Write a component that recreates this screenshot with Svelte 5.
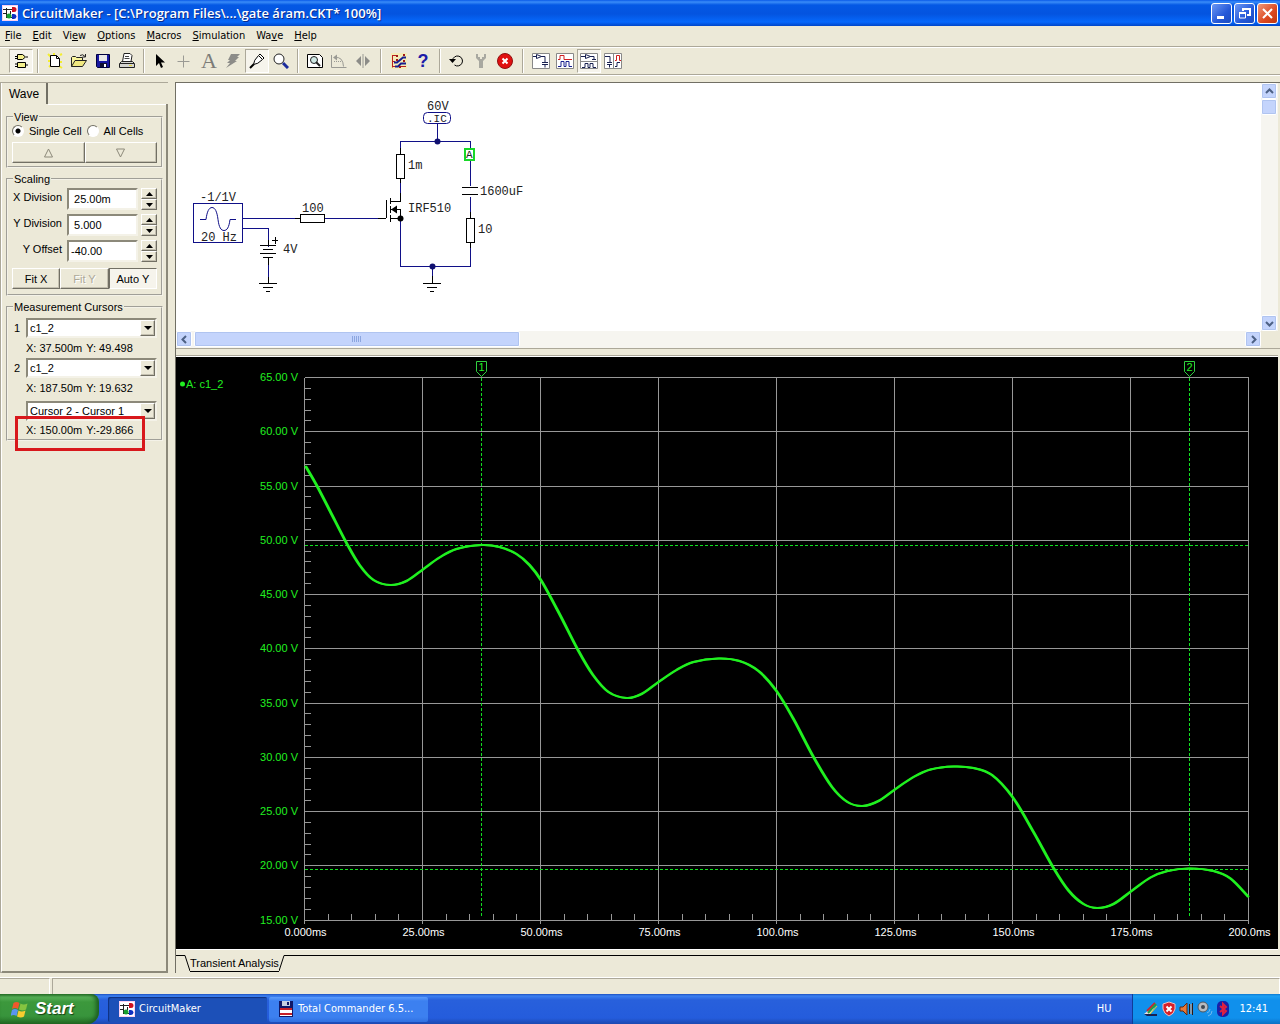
<script>
  const menus = [
    ['', 'F', 'ile'], ['', 'E', 'dit'], ['Vi', 'e', 'w'], ['', 'O', 'ptions'],
    ['', 'M', 'acros'], ['', 'S', 'imulation'], ['Wa', 'v', 'e'], ['', 'H', 'elp'],
  ];

  let scaling = $state([
    { id: 'xdiv', label: 'X Division', value: ' 25.00m' },
    { id: 'ydiv', label: 'Y Division', value: ' 5.000' },
    { id: 'yoff', label: 'Y Offset', value: '-40.00' },
  ]);
  let cell = $state('single');

  // plot area, in screen units
  const left = 304.5;
  const top = 377.5;
  const right = 1248.5;
  const bottom = 920.5;
  const stepX = 118;
  const stepY = 54.25;

  const xLabels = ['0.000ms', '25.00ms', '50.00ms', '75.00ms', '100.0ms', '125.0ms', '150.0ms', '175.0ms', '200.0ms'];
  const yLabels = Array.from({ length: 11 }, (_, i) => `${65 - i * 5}.00 V`);
  const snap = (v) => Math.floor(v) + 0.5;
  const xTicks = Array.from({ length: 41 }, (_, i) => snap(left + i * 23.6));
  const yTicks = Array.from({ length: 51 }, (_, i) => snap(top + i * 10.85));

  const cursors = [
    { n: 1, x: 481.5, y: 545.5 },
    { n: 2, x: 1189.5, y: 869.5 },
  ];

  // cursor lines: 3 on, 2 off
  function dashes({ x, y }) {
    let d = '';
    for (let v = 378; v < bottom - 3; v += 5) d += `M${x} ${v}v3`;
    for (let h = 305; h < right - 3; h += 5) d += `M${h} ${y}h3`;
    return d;
  }

  const samples = [
    [305, 466], [316, 485], [329.5, 511], [346, 543], [359, 565], [373, 580], [390, 585],
    [406, 581], [423, 569], [439, 557.5], [456, 549], [481, 545], [499, 547], [516, 554],
    [529, 565], [541, 581], [559, 614], [577.5, 650], [592.5, 675], [608, 692], [626, 698],
    [641, 694], [658, 682], [676, 670], [693, 662], [718, 658.5], [739, 661], [758, 671],
    [776, 691], [793, 719], [813, 757], [831.5, 787], [847, 802], [862, 806], [878, 801],
    [895, 789], [913, 777], [930, 769.5], [953, 766.5], [973, 768], [991.5, 775], [1012, 797],
    [1033, 832], [1053, 868], [1068, 890.5], [1083, 904], [1097, 908], [1113, 904], [1131, 891],
    [1150, 877.5], [1167, 871], [1189, 868.5], [1213, 871], [1230, 878.5], [1248, 897],
  ];

  function smooth(pts) {
    let d = `M${pts[0][0]} ${pts[0][1]}`;
    for (let i = 0; i < pts.length - 1; i++) {
      const p0 = pts[i - 1] || pts[i];
      const p1 = pts[i];
      const p2 = pts[i + 1];
      const p3 = pts[i + 2] || p2;
      d += `C${p1[0] + (p2[0] - p0[0]) / 6} ${p1[1] + (p2[1] - p0[1]) / 6} `;
      d += `${p2[0] - (p3[0] - p1[0]) / 6} ${p2[1] - (p3[1] - p1[1]) / 6} ${p2[0]} ${p2[1]}`;
    }
    return d;
  }
</script>

{#snippet appIcon()}
  <svg width="16" height="16" viewBox="0 0 16 16">
    <rect width="16" height="16" fill="#fbd0f0" />
    <rect x="1" y="1" width="14" height="14" fill="#fff" />
    <path d="M1 4.500h10M1 8.500h3M4.500 3v10M4 12.500h7M8.500 6v3" stroke="#222" fill="none" />
    <path d="M10 2h2a2.500 2.500 0 0 1 0 5h-2z" fill="#d01020" />
    <circle cx="7" cy="11" r="2.500" fill="#18a030" />
    <path d="M10 9h2a2.500 2.500 0 0 1 0 5h-2z" fill="#1030c0" />
  </svg>
{/snippet}

{#snippet combo(id, label, options)}
  <span class="combo">
    <select {id} aria-label={label}>
      {#each options as o}<option>{o}</option>{/each}
    </select>
    <span class="drop"><svg width="8" height="4" viewBox="0 0 8 4"><path d="M0 0h8L4 4z" /></svg></span>
  </span>
{/snippet}

{#snippet chevron(d)}
  <svg width="9" height="9" viewBox="0 0 9 9"><path {d} fill="none" stroke="#4d6185" stroke-width="2" /></svg>
{/snippet}

<div class="desktop">
  <header class="titlebar">
    {@render appIcon()}
    <h1>CircuitMaker - [C:\Program Files\...\gate áram.CKT* 100%]</h1>
    <div class="winbtns">
      <button aria-label="Minimize"><svg width="19" height="19" viewBox="0 0 19 19"><path d="M5 13.500h7" stroke="#fff" stroke-width="3" /></svg></button>
      <button aria-label="Restore"><svg width="19" height="19" viewBox="0 0 19 19"><path d="M8 7V5h7v6h-3" stroke="#fff" stroke-width="2" fill="none" /><path d="M4.500 8.500h6v5.500h-6z" stroke="#fff" fill="none" /><path d="M4 9h7" stroke="#fff" stroke-width="2" /></svg></button>
      <button class="close" aria-label="Close"><svg width="19" height="19" viewBox="0 0 19 19"><path d="M5 5l9 9M14 5l-9 9" stroke="#fff" stroke-width="2" /></svg></button>
    </div>
  </header>

  <nav class="menubar">
    {#each menus as [a, u, b]}
      <button>{a}<u>{u}</u>{b}</button>
    {/each}
  </nav>

  <div class="toolbar">
    <button class="on" aria-label="Parts"><svg viewBox="0 0 16 16">
      <path d="M4.500 1.500h5l3 2.500-3 2.500h-5zM4.500 9.500h8v5h-8z" fill="#f4f08c" stroke="#000" /><path d="M2 3.500h2M2 5.500h2M13 4h2M2 11h2M2 13.500h2M13 12h2" stroke="#000" />
    </svg></button>
    <i class="sep"></i>
    <button aria-label="New"><svg viewBox="0 0 16 16">
      <path d="M1 1l3 3M1 8h2M2 14l2-2M13 2l2-1M13 9h2M12 13l3 2M7 0v2" stroke="#f4ee30" stroke-width="2" /><path d="M3.500 2.500h6l3 3v8h-9z" fill="#fff" stroke="#000" /><path d="M9.500 2.500v3h3" fill="none" stroke="#000" />
    </svg></button>
    <button aria-label="Open"><svg viewBox="0 0 16 16">
      <path d="M0.500 13.500v-9l1-1h3l1 1h6v3" fill="#f8f49c" stroke="#222" /><path d="M0.500 13.500l3.500-6h11.500l-4 6z" fill="#f0e880" stroke="#222" /><path d="M9 2.500q3-2 5 1M14.500 1v3h-3" fill="none" stroke="#222" />
    </svg></button>
    <button aria-label="Save"><svg viewBox="0 0 16 16">
      <path d="M1.500 1.500h13v13h-12l-1-1z" fill="#1818a0" stroke="#000040" /><path d="M4 2h8v6H4z" fill="#e8e8e8" /><path d="M5 10h7v4H5z" fill="#101030" /><path d="M9 11h2v3H9z" fill="#fff" />
    </svg></button>
    <button aria-label="Print"><svg viewBox="0 0 16 16">
      <path d="M3.500 8.500l1.500-8h6l2 2-1 6" fill="#fff" stroke="#222" /><path d="M6 3.500h4M5.500 5.500h5" stroke="#444" /><path d="M0.500 10.500l2-2h11l2 2v4h-15z" fill="#d4d4d0" stroke="#222" /><path d="M1 10.500h14" stroke="#222" /><path d="M10 12.500h3" stroke="#e8d830" />
    </svg></button>
    <i class="sep"></i>
    <button aria-label="Select"><svg viewBox="0 0 16 16"><path d="M3 1v12l3-3 2 5 2-1-2-4.500h4z" /></svg></button>
    <button aria-label="Wire"><svg viewBox="0 0 16 16"><path d="M6.500 2.500v12M0.500 8.500h12" stroke="#9a9a94" /></svg></button>
    <button class="letter" aria-label="Text">A</button>
    <button aria-label="Delete"><svg viewBox="0 0 16 16"><path d="M6 1h9l-3 3h2l-4 4h2L1 15l4-5H2l3-3H3z" fill="#8c8c88" /></svg></button>
    <button class="on" aria-label="Probe"><svg viewBox="0 0 16 16">
      <path d="M1 15l4-4" stroke="#000" stroke-width="2" /><path d="M4.500 11.500q0-4 5-9l4 4q-5 5-9 5zM10 2l1-1 4 4-1 1" fill="#fff" stroke="#000" />
    </svg></button>
    <button aria-label="Zoom"><svg viewBox="0 0 16 16"><circle cx="6" cy="6" r="5" fill="#fff" stroke="#222" /><path d="M10 10l5 5" stroke="#1c2c9c" stroke-width="3" /></svg></button>
    <i class="sep"></i>
    <button aria-label="Fit"><svg viewBox="0 0 16 16">
      <path d="M0.500 1.500h12l3 3v10h-15z" fill="#fff" stroke="#000" /><circle cx="7" cy="7" r="3.500" fill="#cfe8e4" stroke="#222" /><path d="M9 9l4 4" stroke="#222" stroke-width="2" />
    </svg></button>
    <button aria-label="Rotate"><svg viewBox="0 0 16 16">
      <path d="M0.500 2v12.500h15M4 4.500q8-1 8.500 9" fill="none" stroke="#9a9a94" /><path d="M2 4.500l4-3v6z" fill="#9a9a94" /><path d="M3 8.500h7" stroke="#9a9a94" stroke-dasharray="1 1" />
    </svg></button>
    <button aria-label="Mirror"><svg viewBox="0 0 16 16"><path d="M6 3v10L1 8zM10 3v10l5-5z" fill="#8c8c88" /><path d="M8 1v14" stroke="#9a9a94" /></svg></button>
    <i class="sep wide"></i>
    <button aria-label="Trace"><svg viewBox="0 0 16 16">
      <path d="M0 0h16v16H0z" fill="#f4ecb8" /><path d="M1.500 2v12.500M1 2.500h5M1 8.500h3M1 13.500h4M10 13.500h5" fill="none" stroke="#b82020" /><path d="M3 9.500h3l6-5h3M4 13.500h3l3-3h5" fill="none" stroke="#182090" stroke-width="2" /><path d="M5 2h2v2H5zM12 1h2v2h-2zM12 7h2v2h-2zM5 6h2v2H5zM8 13h2v2H8z" fill="#a01818" />
    </svg></button>
    <button class="help" aria-label="Help">?</button>
    <i class="sep"></i>
    <button aria-label="Reset"><svg viewBox="0 0 16 16"><path d="M3.500 7.500a5 5 0 1 1 2 4.500" fill="none" stroke="#000" /><path d="M0 6h7l-3.500 4z" /></svg></button>
    <button aria-label="Step"><svg viewBox="0 0 16 16"><path d="M3 1v4l3 3v7h4V8l3-3V1h-2v3H9v2H7V4H5V1z" fill="#a8a8a0" /></svg></button>
    <button aria-label="Stop"><svg viewBox="0 0 16 16"><circle cx="8" cy="8" r="7.500" fill="#e01010" stroke="#901010" /><path d="M5.500 5.500l5 5M10.500 5.500l-5 5" stroke="#fff" stroke-width="2" /></svg></button>
    <i class="sep wide"></i>
    <button aria-label="Schematic view"><svg class="view" viewBox="0 0 18 16">
      <path d="M0.500 0.500h17v15h-17z" fill="#fff" stroke="#888" /><path d="M1 3.500h3M4.500 1.500l5 2-5 2zM9 3.500h4v6M10 9.500h6M10 11.500h6M13 11.500v3" fill="none" stroke="#182050" />
    </svg></button>
    <button aria-label="Wave view"><svg class="view" viewBox="0 0 18 16">
      <path d="M0.500 0.500h17v15h-17z" fill="#fff" stroke="#888" /><path d="M2 6.500h2v-4h4v4h8" fill="none" stroke="#d02020" /><path d="M2 13.500h3v-5h3v5h2v-5h3v5h3" fill="none" stroke="#182090" />
    </svg></button>
    <button class="on" aria-label="Split horizontally"><svg class="view" viewBox="0 0 18 16">
      <path d="M0.500 0.500h17v15h-17zM0 8.500h18" fill="#fff" stroke="#888" /><path d="M1 3.500h4M5.500 1.500l5 2-5 2zM10 3.500h4v3M12 6.500h4M2 14.500h3v-4h3v4h2v-4h3v4h3" fill="none" stroke="#182050" />
    </svg></button>
    <button aria-label="Split vertically"><svg class="view" viewBox="0 0 18 16">
      <path d="M0.500 0.500h17v15h-17zM9.500 0v16" fill="#fff" stroke="#888" /><path d="M1 3.500h5v6M3 9.500h5M3 11.500h5M5.500 11.500v3M11 13.500h2v-4h3" fill="none" stroke="#182050" /><path d="M11 7.500h1.500v-5h3v5h1.500" fill="none" stroke="#d02020" />
    </svg></button>
  </div>

  <main>
    <aside>
      <div class="tabs"><button class="tab">Wave</button></div>
      <div class="page">
        <fieldset>
          <legend>View</legend>
          <div class="radios">
            <label><input type="radio" name="cell" value="single" bind:group={cell} />Single Cell</label>
            <label><input type="radio" name="cell" value="all" bind:group={cell} />All Cells</label>
          </div>
          <div class="btns">
            <button aria-label="Previous cell"><svg width="11" height="10" viewBox="0 0 11 10"><path d="M5.500 1l4 8h-8z" fill="none" stroke="#8c897a" /></svg></button>
            <button aria-label="Next cell"><svg width="11" height="10" viewBox="0 0 11 10"><path d="M5.500 9l4-8h-8z" fill="none" stroke="#8c897a" /></svg></button>
          </div>
        </fieldset>

        <fieldset class="scaling">
          <legend>Scaling</legend>
          {#each scaling as s}
            <div class="field">
              <label for={s.id}>{s.label}</label>
              <input type="text" id={s.id} bind:value={s.value} />
              <span class="spin">
                <button aria-label="Increase {s.label}"><svg width="7" height="4" viewBox="0 0 7 4"><path d="M0 4h7L3.500 0z" /></svg></button>
                <button aria-label="Decrease {s.label}"><svg width="7" height="4" viewBox="0 0 7 4"><path d="M0 0h7L3.500 4z" /></svg></button>
              </span>
            </div>
          {/each}
          <div class="btns fit">
            <button>Fit X</button>
            <button disabled>Fit Y</button>
            <button class="pressed">Auto Y</button>
          </div>
        </fieldset>

        <fieldset class="cursors">
          <legend>Measurement Cursors</legend>
          <div class="cursor"><label for="cur1">1</label>{@render combo('cur1', '1', ['c1_2'])}</div>
          <p><span>X: 37.500m</span><span>Y: 49.498</span></p>
          <div class="cursor"><label for="cur2">2</label>{@render combo('cur2', '2', ['c1_2'])}</div>
          <p><span>X: 187.50m</span><span>Y: 19.632</span></p>
          <div class="cursor diff"><span></span>{@render combo('diff', 'Difference', ['Cursor 2 - Cursor 1'])}</div>
          <p class="marked"><span>X: 150.00m</span><span>Y:-29.866</span></p>
        </fieldset>
      </div>
    </aside>

    <section class="work">
      <div class="schematic">
        <div class="canvas">
          <svg width="400" height="220" viewBox="176 83 400 220" shape-rendering="crispEdges">
            <g class="wire">
              <path d="M193.500 203.500h49v39h-49zM200 219.500h6M230 219.500h6" />
              <path d="M243 218.500h52M325 218.500h53M243 228.500h25v18M268.500 263v14" />
              <path d="M437.500 124v17M400.500 148v-6.500h70V186M400.500 181v12M470.500 197v15M400.500 218v48.500h70V246M432.500 266v14" />
              <path class="round" d="M206 219.500c1-8 3-12 6-12s5 4 6 12 3 11 6 11 5-3 6-11" />
              <rect class="round" x="423.500" y="112.500" width="27" height="11" rx="4" />
            </g>
            <g class="part">
              <path d="M295 218.500h5M300.500 214.500h24v8h-24zM378 218.500h8M386.500 200v18" />
              <path d="M400.500 148v6M396.500 154.500h8v24h-8zM400.500 179v4M400.500 193v8h-10M390.500 198v6M390.500 206v7M390.500 215v7M390 218.500h10M390 209.500h10v9" />
              <path d="M462 187.500h16M462 194.500h16M470.500 212v6M466.500 218.500h8v24h-8zM470.500 242v6" />
              <path d="M268.500 240v5M260 245.500h16M263 249.500h10M260 253.500h16M263 257.500h10M268.500 257v8M272 240.500h6M275.500 237v7" />
              <path d="M268.500 277v6M259 283.500h18M263 287.500h10M266 291.500h4M432.500 276v7M423 283.500h18M427 287.500h10M430 291.500h4" />
            </g>
            <path class="dot" d="M391 209.500l6-4v8z" />
            <circle class="dot" cx="400.500" cy="218.500" r="3" />
            <circle class="node" cx="437.500" cy="141.500" r="3" />
            <circle class="node" cx="432.500" cy="266.500" r="3" />
            <rect x="465" y="149" width="9" height="11" fill="#fff" stroke="#18d828" stroke-width="2" />
            <g class="names">
              <text x="200" y="201">-1/1V</text>
              <text x="201" y="241">20 Hz</text>
              <text x="302" y="212">100</text>
              <text x="283" y="253">4V</text>
              <text x="427" y="110">60V</text>
              <text class="small" x="427" y="122">.IC</text>
              <text x="408" y="169">1m</text>
              <text x="408" y="212">IRF510</text>
              <text class="small" x="466" y="158">A</text>
              <text x="480" y="195">1600uF</text>
              <text x="478" y="233">10</text>
            </g>
          </svg>
        </div>
        <div class="vscroll">
          <button aria-label="Scroll up">{@render chevron('M1 6l3.500-3.500L8 6')}</button>
          <span class="thumb"></span>
          <button class="end" aria-label="Scroll down">{@render chevron('M1 3l3.500 3.500L8 3')}</button>
        </div>
        <div class="hscroll">
          <button aria-label="Scroll left">{@render chevron('M6 1L2.500 4.500 6 8')}</button>
          <span class="thumb"><svg width="9" height="6" viewBox="0 0 9 6"><path d="M0.500 0v6M2.500 0v6M4.500 0v6M6.500 0v6M8.500 0v6" stroke="#8ca6e0" /></svg></span>
          <button class="end" aria-label="Scroll right">{@render chevron('M3 1l3.500 3.500L3 8')}</button>
        </div>
      </div>

      <div class="plot">
        <svg viewBox="176 357 1102 592">
          <g class="grid">
            {#each xLabels as _, i}
              <path d="M{left + i * stepX} {top}V924" />
            {/each}
            {#each yLabels as _, i}
              <path d="M{left} {snap(top + i * stepY)}H{right}" />
            {/each}
            {#each xTicks as x}<path d="M{x} {bottom - 7}V{bottom}" />{/each}
            {#each yTicks as y}<path d="M{left} {y}h6" />{/each}
          </g>
          {#each cursors as c}
            <path class="dash" d={dashes(c)} />
            <path class="flag" d="M{c.x - 5} 361.500h10v10l-5 5-5-5z" />
            <text class="green" x={c.x} y="371" text-anchor="middle">{c.n}</text>
          {/each}
          <path class="trace" d={smooth(samples)} />
          <path class="trace" d={smooth(samples)} transform="translate(1 0)" />
          <circle cx="182.500" cy="384" r="2.500" fill="#20f020" />
          <text class="green" x="186" y="388">A: c1_2</text>
          {#each yLabels as label, i}
            <text class="green" x="298" y={Math.floor(top + i * stepY) + 4} text-anchor="end">{label}</text>
          {/each}
          {#each xLabels as label, i}
            <text class="white" x={left + i * stepX + 1} y="936" text-anchor="middle">{label}</text>
          {/each}
        </svg>
      </div>

      <div class="sheets">
        <span class="lead"></span>
        <svg class="slant" width="6" height="17" viewBox="0 0 6 17"><path d="M0 0.500h1l5 15.500" fill="none" stroke="#000" /></svg>
        <button>Transient Analysis</button>
        <svg class="slant" width="6" height="17" viewBox="0 0 6 17"><path d="M0 16L5 0.500h1" fill="none" stroke="#000" /></svg>
        <span class="rest"></span>
      </div>
    </section>
  </main>

  <div class="status"><span></span><span></span></div>

  <footer class="taskbar">
    <button class="start">
      <svg width="18" height="17" viewBox="0 0 18 17">
        <path d="M2.500 2q3-2 6 0L7 8q-3-2-6 0z" fill="#f0582c" /><path d="M9.500 2.500q3 2 7 0L15 8.500q-3 2-7 0z" fill="#86c440" />
        <path d="M1 9q3-2 6 0l-1.500 6q-3-2-6 0z" fill="#5a94f0" /><path d="M7.500 9.500q3 2 7 0L13 15.500q-3 2-7 0z" fill="#f8cc30" />
      </svg>
      Start
    </button>
    <button class="task active">{@render appIcon()}CircuitMaker</button>
    <button class="task">
      <svg width="16" height="16" viewBox="0 0 16 16"><path d="M1 0h14v16H1z" fill="#101868" /><path d="M4 0h8v5H4z" fill="#c8d0e0" /><path d="M9 1h2v3H9z" fill="#101868" /><path d="M2 7h12v8H2z" fill="#fff" /><path d="M2 7h12v2H2zM2 12h12v2H2z" fill="#c82028" /></svg>
      Total Commander 6.5...
    </button>
    <span class="lang">HU</span>
    <div class="tray">
      <svg width="16" height="16" viewBox="0 0 16 16"><path d="M1 13l5-4 7-7-3 7-4 5z" fill="#e8e0e8" /><path d="M4 10l8-8" stroke="#d02030" stroke-width="2" /><path d="M5 12l8-9" stroke="#20a040" stroke-width="2" /><path d="M7 13l7-8" stroke="#f0d020" /><path d="M1 13h13v2H4z" fill="#182050" /></svg>
      <svg width="16" height="16" viewBox="0 0 16 16"><path d="M8 1l6 2v5q-1 5-6 7-5-2-6-7V3z" fill="#d82028" stroke="#f0c0c0" /><path d="M5.500 5.500l5 5M10.500 5.500l-5 5" stroke="#fff" stroke-width="2" /></svg>
      <svg width="16" height="16" viewBox="0 0 16 16"><path d="M1 6h3l4-4v12l-4-4H1z" fill="#e87838" stroke="#602810" /><path d="M10.500 3v10M13.500 2v12" stroke="#301810" /><path d="M12 3v10" stroke="#f0a070" /></svg>
      <svg width="16" height="16" viewBox="0 0 16 16"><circle cx="6" cy="6" r="5" fill="#b8bcc0" stroke="#505860" /><circle cx="6" cy="6" r="2" fill="#404850" /><path d="M10 12q3-1 3-4M11 15q4-1 4-5" fill="none" stroke="#70b8f0" /></svg>
      <svg width="16" height="16" viewBox="0 0 16 16"><rect x="2" y="0" width="12" height="16" rx="5" fill="#1820a8" /><path d="M5 5l6 5-3 3V3l3 3-6 5" fill="none" stroke="#e02040" stroke-width="2" /></svg>
      <time>12:41</time>
    </div>
  </footer>
</div>

<style>
  :global(body) {
    background: #ece9d8;
  }

  .desktop {
    display: flex;
    flex-direction: column;
    min-height: 100vh;
    background: #ece9d8;
    color: #000;
    font: 11px/14px 'Liberation Sans', Arial, sans-serif;
  }

  button, input, select {
    font: inherit;
    color: inherit;
    border: 0;
    border-radius: 0;
    margin: 0;
    padding: 0;
    background: none;
    box-sizing: border-box;
  }

  svg {
    display: block;
    flex: none;
  }

  .titlebar {
    display: flex;
    align-items: center;
    gap: 4px;
    height: 26px;
    padding: 0 2px;
    background: linear-gradient(#0a5ae8, #3a8cf8 2px, #0458e4 5px, #0454e0 14px, #0668fc 22px, #0046c8);
  }

  h1 {
    flex: 1;
    margin: 0;
    font: 600 13px/22px 'Open Sans', sans-serif;
    color: #fff;
    text-shadow: 1px 1px #0a2c8c;
    white-space: nowrap;
  }

  .winbtns {
    display: flex;
    gap: 2px;
  }

  .winbtns button {
    width: 21px;
    height: 21px;
    border: 1px solid #fff;
    border-radius: 3px;
    background: linear-gradient(135deg, #6c98f4, #2458d8 60%, #1c4cc0);
  }

  .winbtns .close {
    background: linear-gradient(135deg, #f09878, #dc4820 60%, #c03810);
  }

  .menubar {
    display: flex;
    gap: 11px;
    height: 20px;
    padding: 0 5px;
    border-bottom: 1px solid #aca899;
    font: 11px/18px 'DejaVu Sans Condensed', 'DejaVu Sans', sans-serif;
  }

  .toolbar {
    display: flex;
    align-items: center;
    height: 26px;
    padding: 0 9px;
    border-top: 1px solid #fff;
    border-bottom: 1px solid #aca899;
  }

  .toolbar button {
    display: flex;
    align-items: center;
    justify-content: center;
    width: 24px;
    height: 24px;
  }

  .toolbar svg {
    width: 16px;
    height: 16px;
  }

  .toolbar svg.view {
    width: 18px;
  }

  .toolbar .on {
    background: #f6f4ec;
    border: 1px solid;
    border-color: #aca899 #fff #fff #aca899;
  }

  .toolbar .letter {
    font: 22px/24px 'Liberation Serif', serif;
    color: #7c7c78;
  }

  .toolbar .help {
    font: bold 18px/24px 'Liberation Sans', sans-serif;
    color: #1c1ca8;
  }

  .sep {
    width: 2px;
    height: 24px;
    margin: 0 4px;
    box-sizing: border-box;
    border-left: 1px solid #aca899;
    border-right: 1px solid #fff;
  }

  .sep.wide {
    margin: 0 5px;
  }

  main {
    flex: 1;
    display: grid;
    grid-template-columns: 168px minmax(0, 1fr);
    gap: 7px;
    padding-top: 6px;
    border-top: 1px solid #fff;
  }

  aside {
    display: flex;
    flex-direction: column;
    margin-bottom: 4px;
    border-left: 1px solid #aca899;
    border-top: 1px solid #aca899;
  }

  .tab {
    width: 47px;
    height: 21px;
    border-right: 2px solid #716f64;
    border-left: 1px solid #fff;
    text-align: center;
    font-size: 12px;
  }

  .page {
    flex: 1;
    padding: 7px 3px 0 4px;
    border: 1px solid #fff;
    border-right: 2px solid #8c897a;
    border-bottom: 2px solid #8c897a;
    border-top: 0;
    background: linear-gradient(#fff, #fff) 46px 0 / 100% 1px no-repeat;
  }

  fieldset {
    min-width: 0;
    margin: 0 0 5px;
    padding: 1px 4px 3px;
    border: 2px groove #f4f2e8;
  }

  legend {
    height: 12px;
    margin-left: 1px;
    padding: 0 1px;
    line-height: 12px;
  }

  .radios {
    display: flex;
    gap: 5px;
    margin-bottom: 4px;
  }

  .radios label {
    display: flex;
    align-items: center;
    gap: 5px;
    white-space: nowrap;
  }

  input[type='radio'] {
    appearance: none;
    width: 12px;
    height: 12px;
    border: 1px solid;
    border-color: #716f64 #fff #fff #716f64;
    border-radius: 50%;
    background: #fff;
  }

  input[type='radio']:checked {
    background: radial-gradient(#000 2px, #fff 3px);
  }

  .btns {
    display: grid;
    grid-template-columns: 1fr 1fr;
  }

  .btns.fit {
    grid-template-columns: 1fr 1fr 1fr;
  }

  .btns button,
  .spin button,
  .drop {
    display: flex;
    align-items: center;
    justify-content: center;
    background: #ece9d8;
    border: 1px solid;
    border-color: #fff #716f64 #716f64 #fff;
    box-shadow: inset -1px -1px #c4c0b0;
  }

  .btns button {
    height: 21px;
  }

  .btns button:disabled {
    color: #aca899;
    text-shadow: 1px 1px #fff;
  }

  .btns .pressed {
    background: #f6f4ec;
    border-color: #716f64 #fff #fff #716f64;
    box-shadow: none;
  }

  .scaling {
    padding-top: 3px;
    padding-bottom: 5px;
  }

  .field {
    display: grid;
    grid-template-columns: 52px 1fr 16px;
    gap: 3px;
    height: 22px;
    margin-bottom: 4px;
  }

  .field label {
    padding-right: 2px;
    text-align: right;
    line-height: 19px;
    white-space: nowrap;
  }

  .field input {
    width: 100%;
    min-width: 0;
    padding: 0 2px;
    background: #fff;
    border: 2px solid;
    border-color: #8c897a #f4f2e8 #f4f2e8 #8c897a;
    white-space: pre;
  }

  .spin {
    display: grid;
    grid-template-rows: 1fr 1fr;
  }

  .scaling .fit {
    margin-top: 6px;
  }

  .cursors {
    padding-top: 5px;
    padding-bottom: 0;
  }

  .cursor {
    display: grid;
    grid-template-columns: 12px 1fr;
    align-items: center;
    height: 20px;
    padding-left: 2px;
  }

  .diff {
    margin-top: 3px;
  }

  .combo {
    position: relative;
    display: block;
    height: 20px;
  }

  .combo select {
    appearance: none;
    width: 100%;
    height: 20px;
    padding: 0 2px;
    background: #fff;
    border: 2px solid;
    border-color: #8c897a #f4f2e8 #f4f2e8 #8c897a;
  }

  .drop {
    position: absolute;
    top: 2px;
    right: 2px;
    bottom: 2px;
    width: 15px;
    box-sizing: border-box;
    pointer-events: none;
  }

  .cursors p {
    display: flex;
    gap: 4px;
    margin: 0;
    padding-left: 14px;
    line-height: 20px;
    white-space: nowrap;
  }

  .cursors .marked {
    position: relative;
    line-height: 18px;
  }

  .marked::after {
    content: '';
    position: absolute;
    inset: -5px 12px -12px 3px;
    border: 3px solid #d8181c;
  }

  .work {
    display: flex;
    flex-direction: column;
    min-width: 0;
    margin-bottom: 4px;
    border-left: 1px solid #716f64;
    border-top: 1px solid #716f64;
  }

  .schematic {
    display: grid;
    grid-template-columns: minmax(0, 1fr) 17px;
    grid-template-rows: auto 17px;
    padding-right: 2px;
    border-bottom: 1px solid #aca899;
  }

  .canvas {
    padding-bottom: 28px;
    background: #fff;
    overflow: hidden;
  }

  .wire path,
  .wire rect {
    fill: none;
    stroke: #101088;
  }

  .wire .round {
    shape-rendering: auto;
  }

  .part path {
    fill: none;
    stroke: #000;
  }

  .node {
    fill: #101070;
    shape-rendering: auto;
  }

  .dot {
    shape-rendering: auto;
  }

  .names text {
    font: 12px 'Liberation Mono', 'Courier New', monospace;
    fill: #222;
  }

  .names .small {
    font-size: 11px;
  }

  .vscroll,
  .hscroll {
    display: flex;
    background: #f6f5f0;
  }

  .vscroll {
    flex-direction: column;
  }

  .vscroll button,
  .hscroll button,
  .thumb {
    display: flex;
    align-items: center;
    justify-content: center;
    box-sizing: border-box;
    width: 16px;
    height: 16px;
    border: 1px solid #fff;
    border-radius: 2px;
    outline: 1px solid #b0c4f0;
    outline-offset: -2px;
    background: #c4d4fc;
  }

  .hscroll .thumb {
    width: 30%;
    margin-left: 2px;
  }

  .vscroll .end {
    margin-top: auto;
  }

  .hscroll .end {
    margin-left: auto;
  }

  .plot {
    flex: 1;
    display: flex;
    margin: 7px 2px 0 0;
    border-top: 1px solid #fff;
    border-bottom: 1px solid #fff;
    background: #000;
    box-shadow: 0 -1px #aca899;
  }

  .plot svg {
    flex: 1;
    width: 100%;
    min-width: 0;
  }

  .grid path {
    fill: none;
    stroke: #989898;
    shape-rendering: crispEdges;
  }

  .dash {
    fill: none;
    stroke: #10e020;
  }

  .flag {
    fill: none;
    stroke: #30d040;
  }

  .trace {
    fill: none;
    stroke: #20f020;
    stroke-width: 2;
  }

  .plot text {
    font: 11px 'Liberation Sans', Arial, sans-serif;
  }

  .plot .green {
    fill: #20f020;
  }

  .plot .white {
    fill: #fff;
  }

  .sheets {
    display: flex;
    height: 17px;
    margin-top: 5px;
    padding-bottom: 1px;
  }

  .sheets button {
    border-bottom: 1px solid #000;
    white-space: nowrap;
  }

  .lead {
    width: 8px;
    border-top: 1px solid #000;
  }

  .rest {
    flex: 1;
    border-top: 1px solid #000;
  }

  .status {
    display: grid;
    grid-template-columns: 50px 1fr;
    gap: 2px;
    height: 16px;
    border-top: 1px solid #fff;
  }

  .status span {
    border-top: 1px solid #aca899;
    border-right: 1px solid #fff;
  }

  .status span + span {
    border-left: 1px solid #aca899;
  }

  .taskbar {
    display: flex;
    align-items: center;
    gap: 2px;
    height: 30px;
    background: linear-gradient(#1c50c0, #3c80f0 2px, #2860dc 6px, #245cdc 24px, #1c48b0);
    color: #fff;
    font: 11px/14px 'DejaVu Sans Condensed', 'DejaVu Sans', sans-serif;
  }

  .start {
    display: flex;
    align-items: center;
    gap: 6px;
    width: 99px;
    height: 30px;
    margin-right: 7px;
    padding-left: 11px;
    border-radius: 0 8px 12px 0;
    background: linear-gradient(#2c7c2c, #58b058 3px, #3c983c 8px, #38943c 22px, #246c24);
    box-shadow: inset -3px 0 4px #1c5c20;
    font: italic bold 17px/24px 'Liberation Sans', sans-serif;
    text-shadow: 1px 1px 1px #144014;
  }

  .task {
    display: flex;
    align-items: center;
    gap: 4px;
    width: 159px;
    height: 25px;
    padding-left: 9px;
    border-radius: 2px;
    background: linear-gradient(#5c9cfc, #3c80f0 4px, #3c80f0 20px, #3070e0);
    white-space: nowrap;
  }

  .task.active {
    padding-left: 11px;
    background: #1c50b8;
    box-shadow: inset 1px 1px 1px #103080;
  }

  .lang {
    margin-left: auto;
    padding-right: 19px;
  }

  .tray {
    display: flex;
    align-items: center;
    align-self: stretch;
    gap: 2px;
    padding: 0 12px 0 10px;
    border-left: 1px solid #103c98;
    background: linear-gradient(#0c78d0, #1ca0f4 2px, #1090ec 6px, #1090ec 24px, #0c70c4);
  }

  time {
    padding-left: 6px;
  }
</style>
